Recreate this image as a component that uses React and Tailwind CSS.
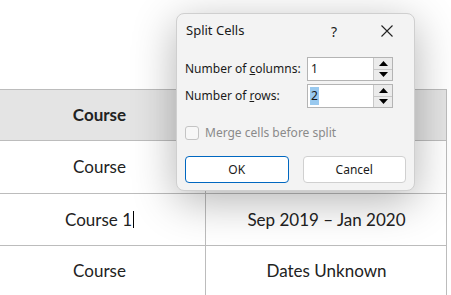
import React from 'react'

const rows = [
  { a: 'Course', b: '', h: 'h-[53px]' },
  { a: 'Course 1', b: 'Sep 2019 – Jan 2020', h: 'h-[52px]', caret: true },
  { a: 'Course', b: 'Dates Unknown', h: 'h-[50px]' },
]

function Spinner() {
  return (
    <div className="flex flex-col w-[19px] h-full border-l border-[#c8c8c8]">
      <div className="flex-1 flex items-center justify-center bg-[#ebebeb] border-b border-[#c8c8c8]">
        <svg width="9" height="5" viewBox="0 0 9 5"><path d="M0 5 L4.5 0 L9 5 Z" fill="#000" /></svg>
      </div>
      <div className="flex-1 flex items-center justify-center bg-[#ebebeb]">
        <svg width="9" height="5" viewBox="0 0 9 5"><path d="M0 0 L4.5 5 L9 0 Z" fill="#000" /></svg>
      </div>
    </div>
  )
}

function NumberRow({ label, value, selected }) {
  return (
    <div className="flex items-center h-[24px]">
      <div className="w-[122px] text-[12px] text-[#1a1a1a] whitespace-nowrap">{label}</div>
      <div className="flex w-[86px] h-full border border-[#b4b4b4] bg-white">
        <div className="flex-1 flex items-center pl-[2px] text-[12px]">
          <span className={selected ? 'bg-[#99c9ef] px-[1px]' : 'px-[1px]'}>{value}</span>
        </div>
        <Spinner />
      </div>
    </div>
  )
}

export default function App() {
  return (
    <div className="relative w-[451px] h-[295px] overflow-hidden bg-white">
      {/* table */}
      <div className="pt-[89px] ml-[-6px] w-[453px] font-['Lato',sans-serif] text-[17px] text-[#222]">
        <div className="grid grid-cols-[212px_241px] h-[52px] bg-[#e4e4e4] border-t border-b border-r border-[#bcbcbc]">
          <div className="flex items-center justify-center font-bold border-r border-[#bcbcbc]">Course</div>
          <div />
        </div>
        {rows.map((r, i) => (
          <div key={i} className={`grid grid-cols-[212px_241px] ${r.h} border-b border-r border-[#bcbcbc]`}>
            <div className="flex items-center justify-center border-r border-[#bcbcbc]">
              {r.a}
              {r.caret && <span className="inline-block w-px h-[17px] bg-black ml-[1px]" />}
            </div>
            <div className="flex items-center justify-center">{r.b}</div>
          </div>
        ))}
      </div>

      {/* dialog */}
      <div className="absolute left-[176px] top-[13px] w-[239px] h-[178px] flex flex-col px-[8px] pb-[9px] rounded-[8px] border border-[#cfcfcf] bg-[#f3f3f3] shadow-[0_10px_44px_rgba(0,0,0,0.3)] font-['Noto_Sans',sans-serif] text-[#1a1a1a]">
        <div className="flex items-center h-[34px] shrink-0 pr-[13px]">
          <div className="flex-1 pl-[1px] text-[13px] whitespace-nowrap">Split Cells</div>
          <div className="w-[14px] text-center text-[14px]">?</div>
          <svg className="ml-[40px]" width="12" height="12" viewBox="0 0 12 12">
            <path d="M0.5 0.5 L11.5 11.5 M11.5 0.5 L0.5 11.5" stroke="#222" strokeWidth="1.1" />
          </svg>
        </div>
        <div className="mt-[9px] flex flex-col gap-[3px]">
          <NumberRow label={<>Number of <u>c</u>olumns:</>} value="1" />
          <NumberRow label={<>Number of <u>r</u>ows:</>} value="2" selected />
        </div>
        <div className="mt-[18px] flex items-center h-[14px] gap-[6px]">
          <div className="w-[14px] h-[14px] rounded-[3px] border border-[#c4c4c4] bg-[#f7f7f7]" />
          <span className="text-[12px] text-[#8a8a8a]">Merge cells before split</span>
        </div>
        <div className="mt-[16px] flex gap-[14px]">
          <button className="w-[104px] h-[27px] rounded-[4px] border border-[#0067c0] bg-white text-[12px]">OK</button>
          <button className="w-[104px] h-[27px] rounded-[4px] border border-[#d0d0d0] bg-white text-[12px]">Cancel</button>
        </div>
      </div>
    </div>
  )
}
